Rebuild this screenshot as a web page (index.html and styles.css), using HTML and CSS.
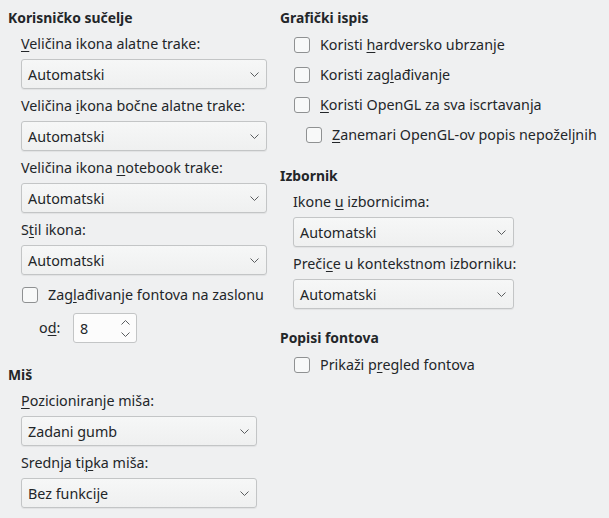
FILE: index.html
```html
<!DOCTYPE html>
<html lang="hr">
<head>
<meta charset="utf-8">
<link rel="stylesheet" href="styles.css">
</head>
<body>
<div class="page">
  <div class="col col-left">
    <div class="section">
      <div class="head">Korisničko sučelje</div>
      <div class="body">
        <div class="label"><u>V</u>eličina ikona alatne trake:</div>
        <div class="combo w-left"><span>Automatski</span><svg class="chev" width="9" height="5" viewBox="0 0 9 5"><polyline points="0.5,0.5 4.5,4.5 8.5,0.5"/></svg></div>
        <div class="label">Veličina <u>i</u>kona bočne alatne trake:</div>
        <div class="combo w-left"><span>Automatski</span><svg class="chev" width="9" height="5" viewBox="0 0 9 5"><polyline points="0.5,0.5 4.5,4.5 8.5,0.5"/></svg></div>
        <div class="label">Veličina ikona <u>n</u>otebook trake:</div>
        <div class="combo w-left"><span>Automatski</span><svg class="chev" width="9" height="5" viewBox="0 0 9 5"><polyline points="0.5,0.5 4.5,4.5 8.5,0.5"/></svg></div>
        <div class="label">S<u>t</u>il ikona:</div>
        <div class="combo w-left"><span>Automatski</span><svg class="chev" width="9" height="5" viewBox="0 0 9 5"><polyline points="0.5,0.5 4.5,4.5 8.5,0.5"/></svg></div>
        <div class="check check-left"><span class="box"></span><span>Zag<u>l</u>ađivanje fontova na zaslonu</span></div>
        <div class="spinrow">
          <span class="spinlabel">o<u>d</u>:</span>
          <div class="spin"><span>8</span>
            <svg class="arrows" width="9" height="17" viewBox="0 0 9 17"><polyline points="0.5,4.5 4.5,0.5 8.5,4.5"/><polyline points="0.5,12.5 4.5,16.5 8.5,12.5"/></svg>
          </div>
        </div>
      </div>
    </div>
    <div class="section sec-mouse">
      <div class="head">Miš</div>
      <div class="body">
        <div class="label"><u>P</u>ozicioniranje miša:</div>
        <div class="combo w-mouse"><span>Zadani gumb</span><svg class="chev" width="9" height="5" viewBox="0 0 9 5"><polyline points="0.5,0.5 4.5,4.5 8.5,0.5"/></svg></div>
        <div class="label">Srednja ti<u>p</u>ka miša:</div>
        <div class="combo w-mouse"><span>Bez funkcije</span><svg class="chev" width="9" height="5" viewBox="0 0 9 5"><polyline points="0.5,0.5 4.5,4.5 8.5,0.5"/></svg></div>
      </div>
    </div>
  </div>
  <div class="col col-right">
    <div class="section">
      <div class="head">Grafički ispis</div>
      <div class="body checks">
        <div class="check"><span class="box"></span><span>Koristi <u>h</u>ardversko ubrzanje</span></div>
        <div class="check"><span class="box"></span><span>Koristi zag<u>l</u>ađivanje</span></div>
        <div class="check"><span class="box"></span><span><u>K</u>oristi OpenGL za sva iscrtavanja</span></div>
        <div class="check nested"><span class="box"></span><span><u>Z</u>anemari OpenGL-ov popis nepoželjnih</span></div>
      </div>
    </div>
    <div class="section sec-menu">
      <div class="head">Izbornik</div>
      <div class="body">
        <div class="label">Ikone <u>u</u> izbornicima:</div>
        <div class="combo w-right"><span>Automatski</span><svg class="chev" width="9" height="5" viewBox="0 0 9 5"><polyline points="0.5,0.5 4.5,4.5 8.5,0.5"/></svg></div>
        <div class="label">Preči<u>c</u>e u kontekstnom izborniku:</div>
        <div class="combo w-right"><span>Automatski</span><svg class="chev" width="9" height="5" viewBox="0 0 9 5"><polyline points="0.5,0.5 4.5,4.5 8.5,0.5"/></svg></div>
      </div>
    </div>
    <div class="section sec-fonts">
      <div class="head">Popisi fontova</div>
      <div class="body checks">
        <div class="check"><span class="box"></span><span>Prikaži p<u>r</u>egled fontova</span></div>
      </div>
    </div>
  </div>
</div>
</body>
</html>
```
FILE: styles.css
```css
html, body {
  margin: 0;
  padding: 0;
  background: #eff0f1;
}
body {
  font-family: "Noto Sans", "DejaVu Sans", sans-serif;
  font-size: 14.3px;
  color: #232629;
  width: 609px;
  height: 518px;
  overflow: hidden;
}
u {
  text-decoration-thickness: 1px;
  text-underline-offset: 2px;
}
.page {
  display: flex;
  padding: 9px 0 0 8px;
}
.col-left {
  width: 272px;
  display: flex;
  flex-direction: column;
}
.col-right {
  display: flex;
  flex-direction: column;
}
.head {
  font-weight: bold;
  font-size: 13.9px;
  line-height: 18px;
  height: 18px;
}
.body {
  padding-left: 13px;
  display: flex;
  flex-direction: column;
  align-items: flex-start;
}
.label {
  line-height: 18px;
  height: 18px;
  margin-top: 8px;
  margin-bottom: 6px;
  white-space: nowrap;
}
.combo {
  box-sizing: border-box;
  height: 30px;
  border: 1px solid #c3c5c6;
  border-radius: 3px;
  background: linear-gradient(#f6f7f7, #eff0f0);
  box-shadow: 0 1px 1px rgba(0, 0, 0, 0.06);
  display: flex;
  align-items: center;
  justify-content: space-between;
  padding: 0 7px 0 6px;
}
.combo .chev polyline,
.spin .arrows polyline {
  fill: none;
  stroke: #5a5d5f;
  stroke-width: 1;
}
.w-left { width: 246px; }
.w-mouse { width: 236px; }
.w-right { width: 221px; }
.check {
  display: flex;
  align-items: center;
  gap: 10px;
  line-height: 18px;
  height: 18px;
  white-space: nowrap;
}
.box {
  box-sizing: border-box;
  width: 16px;
  height: 16px;
  border: 1px solid #8f9192;
  border-radius: 3px;
  background: #f8f9f9;
  flex: none;
}
.check-left {
  margin-top: 11px;
  margin-left: 1px;
}
.spinrow {
  display: flex;
  align-items: center;
  margin-top: 9px;
  margin-left: 18px;
}
.spinlabel {
  line-height: 18px;
  width: 34px;
}
.spin {
  box-sizing: border-box;
  width: 64px;
  height: 30px;
  border: 1px solid #c3c5c6;
  border-radius: 3px;
  background: #fcfcfc;
  display: flex;
  align-items: center;
  justify-content: space-between;
  padding: 0 6px 0 6px;
}
.sec-mouse { margin-top: 23px; }
.checks { padding-left: 14px; }
.checks .check { margin-top: 9px; }
.checks .check + .check { margin-top: 12px; }
.nested { margin-left: 12px; }
.sec-menu { margin-top: 23px; }
.sec-fonts { margin-top: 20px; }
```
